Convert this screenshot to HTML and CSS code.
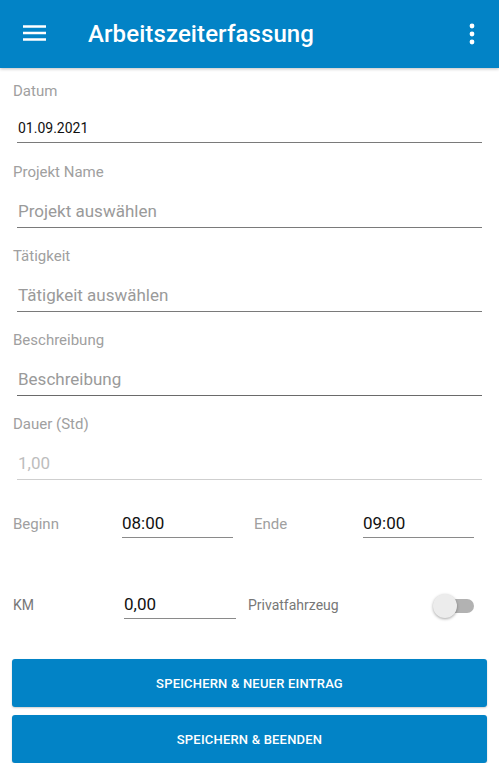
FILE: index.html
```html
<!DOCTYPE html>
<html>
<head>
  <title>Arbeitszeiterfassung</title>
  <link rel="stylesheet" href="styles.css">
</head>
<body>
  <div class="appbar">
    <svg class="menu-icon" width="24" height="24" viewBox="0 0 24 24">
      <path d="M1 4.5h23M1 11h23M1 17.5h23" stroke="#fff" stroke-width="2.4"/>
    </svg>
    <h1 class="title">Arbeitszeiterfassung</h1>
    <svg class="more-icon" width="6" height="22" viewBox="0 0 6 22">
      <circle cx="3" cy="3" r="2.4" fill="#fff"/>
      <circle cx="3" cy="11" r="2.4" fill="#fff"/>
      <circle cx="3" cy="19" r="2.4" fill="#fff"/>
    </svg>
  </div>

  <div class="form">
    <div class="field field-date">
      <div class="label">Datum</div>
      <div class="input date">01.09.2021</div>
    </div>
    <div class="field">
      <div class="label">Projekt Name</div>
      <div class="input placeholder">Projekt auswählen</div>
    </div>
    <div class="field">
      <div class="label">Tätigkeit</div>
      <div class="input placeholder">Tätigkeit auswählen</div>
    </div>
    <div class="field">
      <div class="label">Beschreibung</div>
      <div class="input placeholder dark-line">Beschreibung</div>
    </div>
    <div class="field">
      <div class="label">Dauer (Std)</div>
      <div class="input disabled">1,00</div>
    </div>

    <div class="row time-row">
      <div class="label">Beginn</div>
      <div class="input small">08:00</div>
      <div></div>
      <div class="label">Ende</div>
      <div class="input small">09:00</div>
    </div>

    <div class="row km-row">
      <div class="label small-label">KM</div>
      <div class="input small">0,00</div>
      <div></div>
      <div class="label small-label">Privatfahrzeug</div>
      <div class="switch"><span class="thumb"></span></div>
    </div>
  </div>

  <div class="buttons">
    <button class="btn">SPEICHERN &amp; NEUER EINTRAG</button>
    <button class="btn">SPEICHERN &amp; BEENDEN</button>
  </div>
</body>
</html>
```

FILE: styles.css
```css
body {
  margin: 0;
  font-family: Roboto, "Liberation Sans", sans-serif;
  background: #fff;
  color: #212121;
}

.appbar {
  height: 68px;
  background-color: #0283c6;
  display: flex;
  align-items: center;
  padding: 0 24px 0 22px;
  box-shadow: 0 1px 3px rgba(0, 0, 0, 0.25);
}

.menu-icon {
  flex: none;
}

.title {
  flex: 1;
  margin: 0 0 0 42px;
  font-size: 24px;
  font-weight: 500;
  color: #fff;
  letter-spacing: 0.1px;
}

.more-icon {
  flex: none;
}

.form {
  padding: 13px 17px 0 13px;
}

.label {
  font-size: 15px;
  line-height: 20px;
  color: #a0a0a0;
}

.field {
  margin-bottom: 18px;
}

.input {
  margin-left: 4px;
  border-bottom: 1.5px solid #7a7a7a;
  font-size: 17px;
  line-height: 22px;
  padding: 18px 0 5px 1px;
}

.input.date {
  font-size: 14px;
  color: #111;
  padding: 16px 0 3px 1px;
}

.field-date {
  margin-bottom: 19px;
}

.input.placeholder {
  color: #9a9a9a;
}

.input.dark-line {
  border-bottom-color: #6a6a6a;
}

.input.disabled {
  color: #bdbdbd;
  border-bottom-color: #cfcfcf;
}

.row {
  display: grid;
  align-items: end;
}

.time-row {
  grid-template-columns: 109px 111px 21px 109px 111px;
  margin-top: 32px;
}

.km-row {
  grid-template-columns: 111px 112px 12px 185px 41px;
  margin-top: 55px;
}

.row .label {
  padding-bottom: 4px;
}

.row .small-label {
  font-size: 14px;
  color: #777;
  padding-bottom: 4px;
}

.input.small {
  margin-left: 0;
  color: #111;
  padding: 0 0 3px 0;
  border-bottom-color: #8a8a8a;
}

.switch {
  position: relative;
  height: 14px;
  margin-bottom: 6px;
  border-radius: 7px;
  background: #b2b2b2;
  margin-left: 6px;
}

.switch .thumb {
  position: absolute;
  left: -6px;
  top: -5px;
  width: 24px;
  height: 24px;
  border-radius: 50%;
  background: #ececec;
  box-shadow: 0 1px 3px rgba(0, 0, 0, 0.35);
}

.buttons {
  padding: 40px 12px 0 12px;
  display: flex;
  flex-direction: column;
  gap: 8px;
}

.btn {
  height: 48px;
  border: none;
  border-radius: 3px;
  background: #0283c6;
  color: #fff;
  font-family: Roboto, "Liberation Sans", sans-serif;
  font-size: 13px;
  font-weight: 500;
  letter-spacing: 0.2px;
  box-shadow: 0 1px 2px rgba(0, 0, 0, 0.2);
}
```
